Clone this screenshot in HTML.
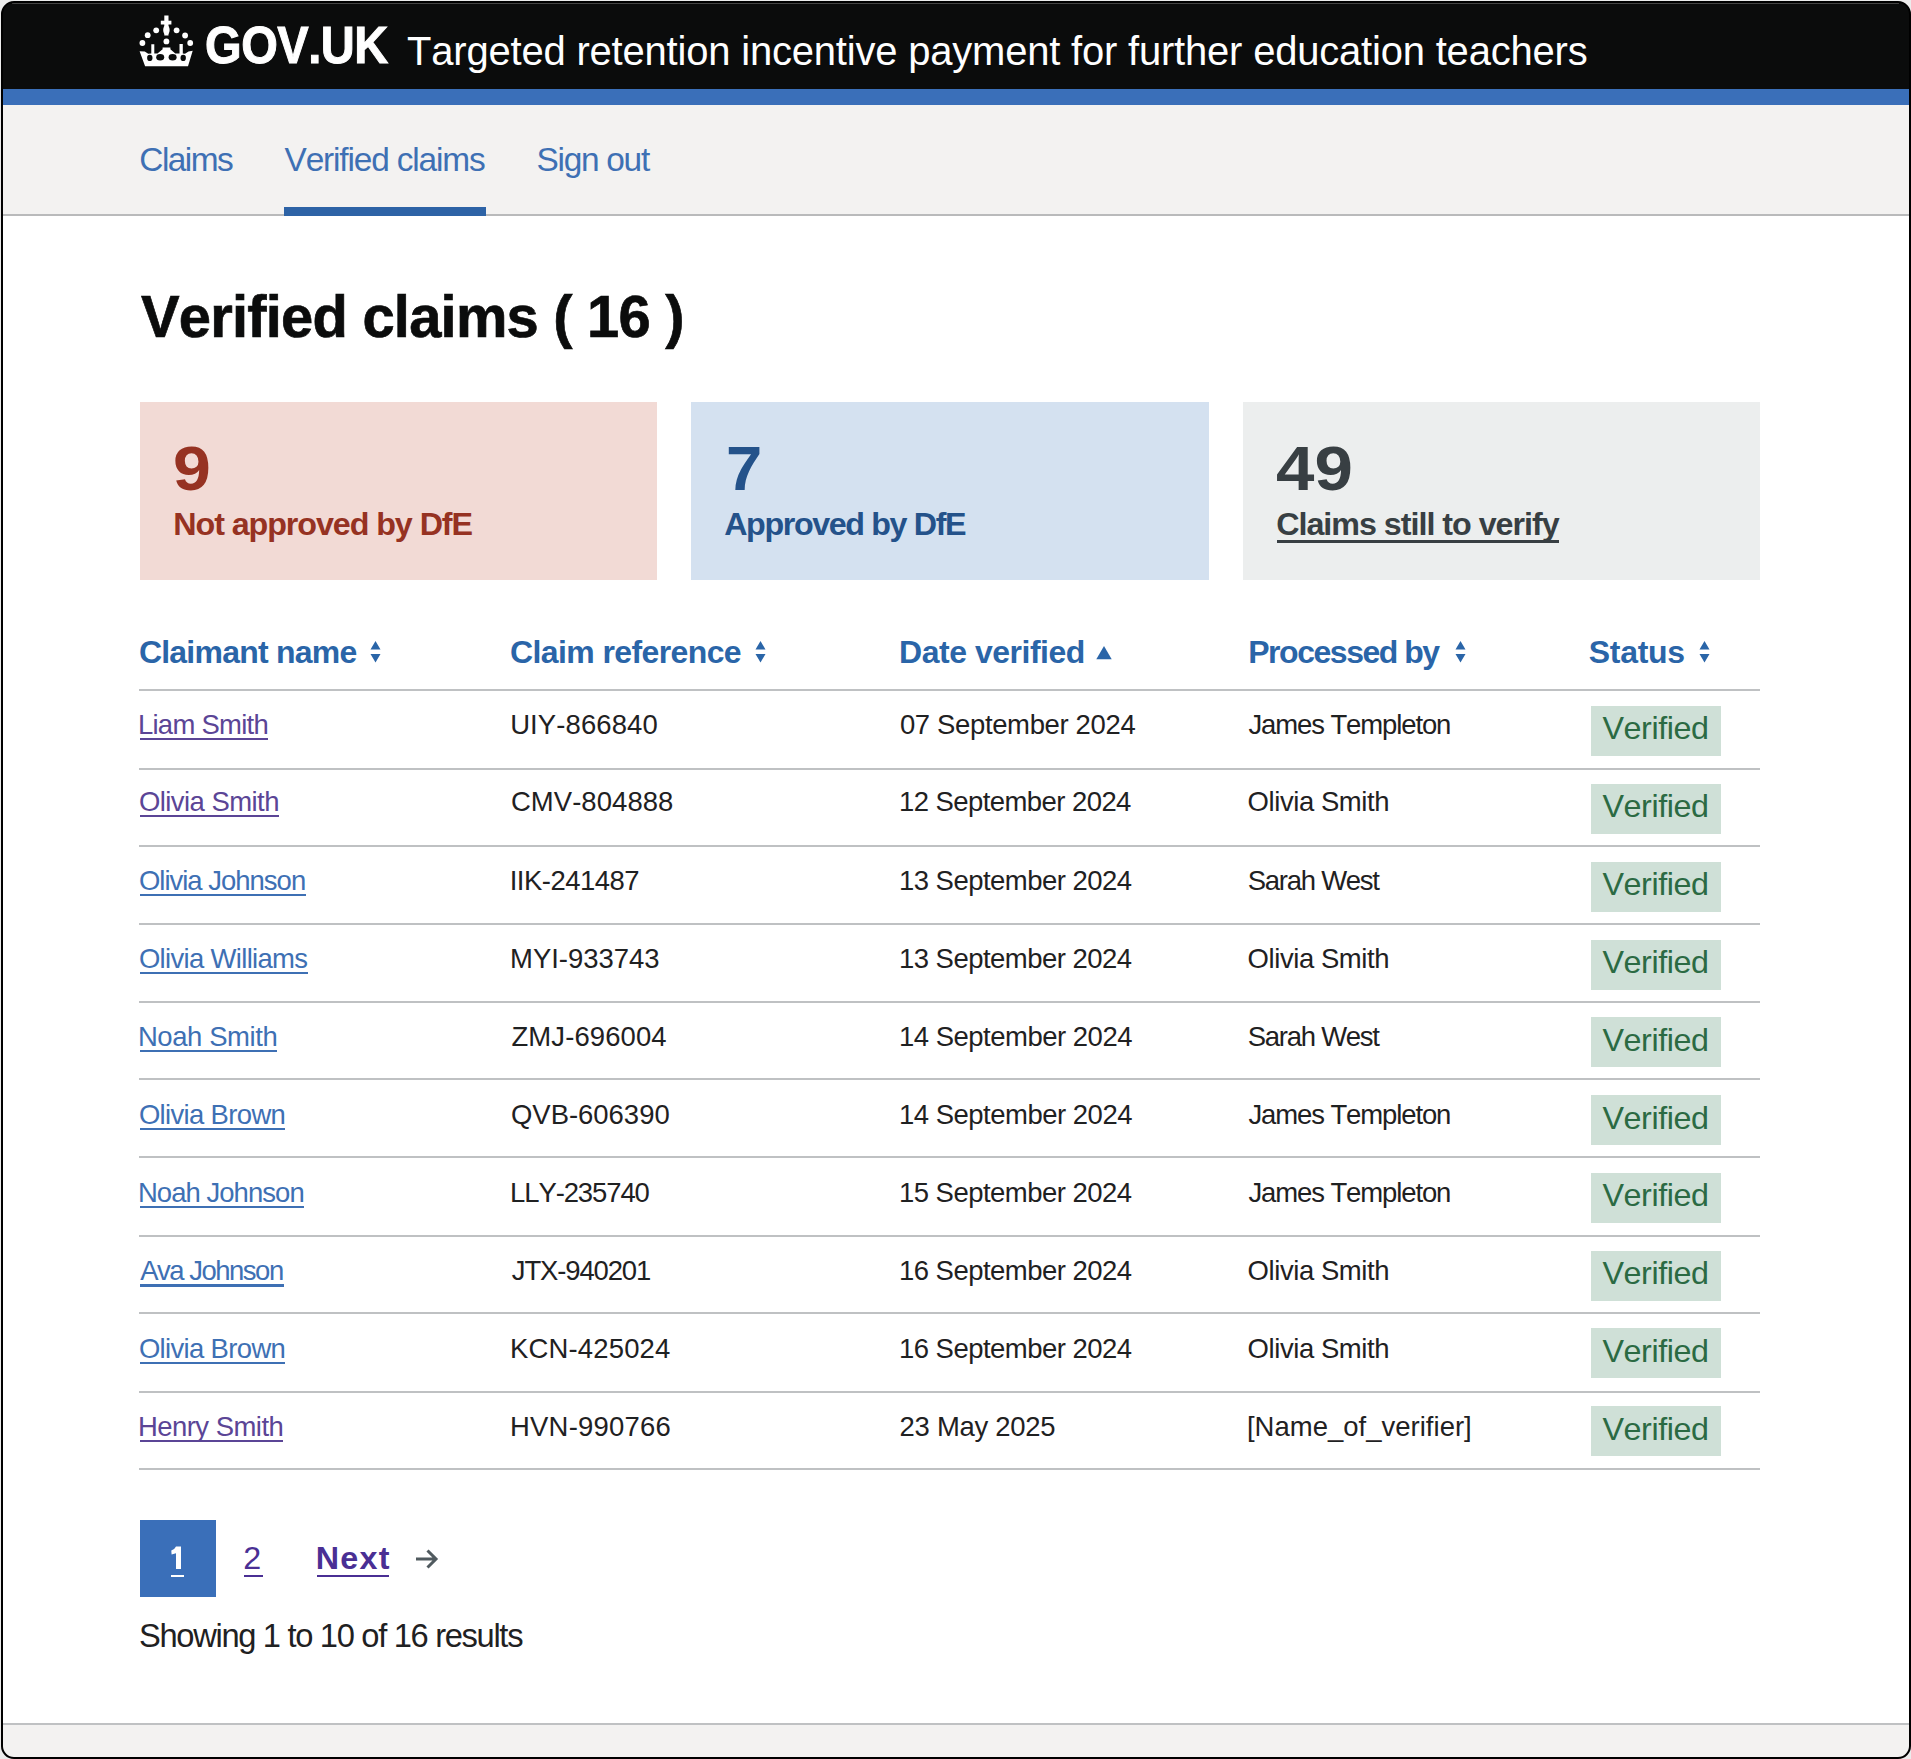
<!DOCTYPE html>
<html><head><meta charset="utf-8"><title>Verified claims</title>
<style>
html,body{margin:0;padding:0;background:#ffffff;}
body{width:1911px;height:1759px;position:relative;overflow:hidden;font-family:"Liberation Sans",sans-serif;}
.t{position:absolute;white-space:nowrap;margin:0;font-kerning:none;}
.b{position:absolute;}
.frame{position:absolute;left:0;top:0;width:1911px;height:1759px;box-sizing:border-box;pointer-events:none;}
</style></head><body>
<div class="b" style="left:0px;top:0px;width:1911px;height:89px;background:#0b0c0c;"></div>
<div class="b" style="left:12px;top:3px;width:1887px;height:1px;background:#444444;"></div>
<div class="b" style="left:0px;top:89px;width:1911px;height:16px;background:#3a6fb9;"></div>
<div class="b" style="left:0px;top:105px;width:1911px;height:109px;background:#f3f2f1;"></div>
<div class="b" style="left:0px;top:214px;width:1911px;height:2px;background:#b9babb;"></div>
<div class="t" style="left:205.37px;top:19.64px;font-size:51.45px;line-height:51.45px;letter-spacing:-0.500px;color:#ffffff;transform:scaleX(0.9147);transform-origin:0 0;font-weight:700;-webkit-text-stroke:1px #ffffff;">GOV.UK</div>
<div class="t" style="left:407.10px;top:31.76px;font-size:39.97px;line-height:39.97px;letter-spacing:-0.190px;color:#ffffff;">Targeted retention incentive payment for further education teachers</div>
<div class="t" style="left:139.30px;top:143.00px;font-size:33.43px;line-height:33.43px;letter-spacing:-1.529px;color:#3e70b4;">Claims</div>
<div class="t" style="left:284.55px;top:143.00px;font-size:33.43px;line-height:33.43px;letter-spacing:-1.158px;color:#3e70b4;">Verified claims</div>
<div class="t" style="left:536.48px;top:143.00px;font-size:33.43px;line-height:33.43px;letter-spacing:-1.272px;color:#3e70b4;">Sign out</div>
<div class="b" style="left:284px;top:207px;width:202px;height:9px;background:#2d63a6;"></div>
<div class="t" style="left:140.90px;top:287.15px;font-size:59.59px;line-height:59.59px;letter-spacing:-0.800px;color:#0b0c0c;transform:scaleX(0.9717);transform-origin:0 0;font-weight:700;-webkit-text-stroke:0.7px #0b0c0c;">Verified claims ( 16 )</div>
<div class="b" style="left:139.7px;top:402px;width:517.5px;height:178px;background:#f2dad5;"></div>
<div class="b" style="left:691.2px;top:402px;width:517.5px;height:178px;background:#d4e1f0;"></div>
<div class="b" style="left:1242.5px;top:402px;width:517.5px;height:178px;background:#eceeee;"></div>
<div class="t" style="left:173.14px;top:437.54px;font-size:62.21px;line-height:62.21px;letter-spacing:0.000px;color:#963222;transform:scaleX(1.0952);transform-origin:0 0;font-weight:700;">9</div>
<div class="t" style="left:173.34px;top:507.69px;font-size:32.27px;line-height:32.27px;letter-spacing:-1.077px;color:#963222;font-weight:700;">Not approved by DfE</div>
<div class="t" style="left:725.50px;top:437.64px;font-size:62.21px;line-height:62.21px;letter-spacing:0.000px;color:#24528a;transform:scaleX(1.0483);transform-origin:0 0;font-weight:700;">7</div>
<div class="t" style="left:724.20px;top:507.69px;font-size:32.27px;line-height:32.27px;letter-spacing:-1.385px;color:#24528a;font-weight:700;">Approved by DfE</div>
<div class="t" style="left:1275.55px;top:437.64px;font-size:62.21px;line-height:62.21px;letter-spacing:0.000px;color:#383f43;transform:scaleX(1.1100);transform-origin:0 0;font-weight:700;">49</div>
<div class="t" style="left:1276.18px;top:507.89px;font-size:32.27px;line-height:32.27px;letter-spacing:-1.017px;color:#383f43;font-weight:700;">Claims still to verify</div>
<div class="b" style="left:1276.6px;top:540px;width:282.9000000000001px;height:2.6000000000000227px;background:#383f43;"></div>
<div class="t" style="left:138.89px;top:635.93px;font-size:31.98px;line-height:31.98px;letter-spacing:-0.755px;color:#2a65a8;font-weight:700;">Claimant name</div>
<div class="t" style="left:510.09px;top:635.93px;font-size:31.98px;line-height:31.98px;letter-spacing:-0.596px;color:#2a65a8;font-weight:700;">Claim reference</div>
<div class="t" style="left:899.06px;top:635.93px;font-size:31.98px;line-height:31.98px;letter-spacing:-0.466px;color:#2a65a8;font-weight:700;">Date verified</div>
<div class="t" style="left:1248.26px;top:635.93px;font-size:31.98px;line-height:31.98px;letter-spacing:-1.459px;color:#2a65a8;font-weight:700;">Processed by</div>
<div class="t" style="left:1588.78px;top:635.93px;font-size:31.98px;line-height:31.98px;letter-spacing:-0.279px;color:#2a65a8;font-weight:700;">Status</div>
<svg class="b" style="left:370px;top:641px" width="11" height="22" viewBox="0 0 11 22"><path d="M5.5 0 L10.5 8.5 L0.5 8.5 Z M0.5 13 L10.5 13 L5.5 21.5 Z" fill="#2a65a8"/></svg>
<svg class="b" style="left:754.5px;top:641px" width="11" height="22" viewBox="0 0 11 22"><path d="M5.5 0 L10.5 8.5 L0.5 8.5 Z M0.5 13 L10.5 13 L5.5 21.5 Z" fill="#2a65a8"/></svg>
<svg class="b" style="left:1454.5px;top:641px" width="11" height="22" viewBox="0 0 11 22"><path d="M5.5 0 L10.5 8.5 L0.5 8.5 Z M0.5 13 L10.5 13 L5.5 21.5 Z" fill="#2a65a8"/></svg>
<svg class="b" style="left:1698.5px;top:641px" width="11" height="22" viewBox="0 0 11 22"><path d="M5.5 0 L10.5 8.5 L0.5 8.5 Z M0.5 13 L10.5 13 L5.5 21.5 Z" fill="#2a65a8"/></svg>
<svg class="b" style="left:1096px;top:646px" width="16" height="14" viewBox="0 0 16 14"><path d="M8 0 L15.7 13.2 L0.3 13.2 Z" fill="#2a65a8"/></svg>
<div class="b" style="left:139px;top:689px;width:1621px;height:2px;background:#bfc1c3;"></div>
<div class="b" style="left:139px;top:768px;width:1621px;height:2px;background:#bfc1c3;"></div>
<div class="b" style="left:139px;top:845px;width:1621px;height:2px;background:#bfc1c3;"></div>
<div class="b" style="left:139px;top:923px;width:1621px;height:2px;background:#bfc1c3;"></div>
<div class="b" style="left:139px;top:1001px;width:1621px;height:2px;background:#bfc1c3;"></div>
<div class="b" style="left:139px;top:1078px;width:1621px;height:2px;background:#bfc1c3;"></div>
<div class="b" style="left:139px;top:1156px;width:1621px;height:2px;background:#bfc1c3;"></div>
<div class="b" style="left:139px;top:1235px;width:1621px;height:2px;background:#bfc1c3;"></div>
<div class="b" style="left:139px;top:1312px;width:1621px;height:2px;background:#bfc1c3;"></div>
<div class="b" style="left:139px;top:1391px;width:1621px;height:2px;background:#bfc1c3;"></div>
<div class="b" style="left:139px;top:1468px;width:1621px;height:2px;background:#bfc1c3;"></div>
<div class="t" style="left:137.95px;top:710.60px;font-size:27.47px;line-height:27.47px;letter-spacing:-0.729px;color:#5b4596;">Liam Smith</div>
<div class="b" style="left:139.7px;top:737.6px;width:128.60000000000002px;height:2.2999999999999545px;background:#5b4596;"></div>
<div class="t" style="left:510.18px;top:710.60px;font-size:27.47px;line-height:27.47px;letter-spacing:0.109px;color:#1f2122;">UIY-866840</div>
<div class="t" style="left:899.93px;top:710.60px;font-size:27.47px;line-height:27.47px;letter-spacing:-0.346px;color:#1f2122;">07 September 2024</div>
<div class="t" style="left:1248.47px;top:710.60px;font-size:27.47px;line-height:27.47px;letter-spacing:-1.101px;color:#1f2122;">James Templeton</div>
<div class="b" style="left:1590.5px;top:706.3px;width:130.0999999999999px;height:50.0px;background:#cfe0d7;"></div>
<div class="t" style="left:1602.46px;top:711.99px;font-size:32.27px;line-height:32.27px;letter-spacing:-0.426px;color:#2b6a43;">Verified</div>
<div class="t" style="left:138.90px;top:788.25px;font-size:27.47px;line-height:27.47px;letter-spacing:-0.542px;color:#5b4596;">Olivia Smith</div>
<div class="b" style="left:139.7px;top:815.3px;width:139.3px;height:2.2000000000000455px;background:#5b4596;"></div>
<div class="t" style="left:510.90px;top:788.25px;font-size:27.47px;line-height:27.47px;letter-spacing:0.070px;color:#1f2122;">CMV-804888</div>
<div class="t" style="left:898.91px;top:788.25px;font-size:27.47px;line-height:27.47px;letter-spacing:-0.551px;color:#1f2122;">12 September 2024</div>
<div class="t" style="left:1247.60px;top:788.25px;font-size:27.47px;line-height:27.47px;letter-spacing:-0.423px;color:#1f2122;">Olivia Smith</div>
<div class="b" style="left:1590.5px;top:783.6px;width:130.0999999999999px;height:50.0px;background:#cfe0d7;"></div>
<div class="t" style="left:1602.46px;top:790.29px;font-size:32.27px;line-height:32.27px;letter-spacing:-0.426px;color:#2b6a43;">Verified</div>
<div class="t" style="left:138.90px;top:867.05px;font-size:27.47px;line-height:27.47px;letter-spacing:-0.992px;color:#3e70b4;">Olivia Johnson</div>
<div class="b" style="left:139.7px;top:894.1px;width:166.0px;height:2.199999999999932px;background:#3e70b4;"></div>
<div class="t" style="left:509.76px;top:867.05px;font-size:27.47px;line-height:27.47px;letter-spacing:-0.521px;color:#1f2122;">IIK-241487</div>
<div class="t" style="left:898.91px;top:867.05px;font-size:27.47px;line-height:27.47px;letter-spacing:-0.507px;color:#1f2122;">13 September 2024</div>
<div class="t" style="left:1247.65px;top:867.05px;font-size:27.47px;line-height:27.47px;letter-spacing:-1.240px;color:#1f2122;">Sarah West</div>
<div class="b" style="left:1590.5px;top:861.8px;width:130.0999999999999px;height:50.0px;background:#cfe0d7;"></div>
<div class="t" style="left:1602.46px;top:868.49px;font-size:32.27px;line-height:32.27px;letter-spacing:-0.426px;color:#2b6a43;">Verified</div>
<div class="t" style="left:138.90px;top:944.85px;font-size:27.47px;line-height:27.47px;letter-spacing:-0.669px;color:#3e70b4;">Olivia Williams</div>
<div class="b" style="left:139.7px;top:971.9px;width:168.7px;height:2.2000000000000455px;background:#3e70b4;"></div>
<div class="t" style="left:510.05px;top:944.85px;font-size:27.47px;line-height:27.47px;letter-spacing:-0.010px;color:#1f2122;">MYI-933743</div>
<div class="t" style="left:898.91px;top:944.85px;font-size:27.47px;line-height:27.47px;letter-spacing:-0.507px;color:#1f2122;">13 September 2024</div>
<div class="t" style="left:1247.60px;top:944.85px;font-size:27.47px;line-height:27.47px;letter-spacing:-0.423px;color:#1f2122;">Olivia Smith</div>
<div class="b" style="left:1590.5px;top:939.5px;width:130.0999999999999px;height:50.0px;background:#cfe0d7;"></div>
<div class="t" style="left:1602.46px;top:946.19px;font-size:32.27px;line-height:32.27px;letter-spacing:-0.426px;color:#2b6a43;">Verified</div>
<div class="t" style="left:137.95px;top:1022.65px;font-size:27.47px;line-height:27.47px;letter-spacing:-0.410px;color:#3e70b4;">Noah Smith</div>
<div class="b" style="left:139.7px;top:1049.7px;width:137.60000000000002px;height:2.2000000000000455px;background:#3e70b4;"></div>
<div class="t" style="left:511.43px;top:1022.65px;font-size:27.47px;line-height:27.47px;letter-spacing:0.107px;color:#1f2122;">ZMJ-696004</div>
<div class="t" style="left:898.91px;top:1022.65px;font-size:27.47px;line-height:27.47px;letter-spacing:-0.482px;color:#1f2122;">14 September 2024</div>
<div class="t" style="left:1247.65px;top:1022.65px;font-size:27.47px;line-height:27.47px;letter-spacing:-1.240px;color:#1f2122;">Sarah West</div>
<div class="b" style="left:1590.5px;top:1017.3px;width:130.0999999999999px;height:50.0px;background:#cfe0d7;"></div>
<div class="t" style="left:1602.46px;top:1023.99px;font-size:32.27px;line-height:32.27px;letter-spacing:-0.426px;color:#2b6a43;">Verified</div>
<div class="t" style="left:138.90px;top:1101.05px;font-size:27.47px;line-height:27.47px;letter-spacing:-0.655px;color:#3e70b4;">Olivia Brown</div>
<div class="b" style="left:139.7px;top:1128.1px;width:145.7px;height:2.2000000000000455px;background:#3e70b4;"></div>
<div class="t" style="left:511.00px;top:1101.05px;font-size:27.47px;line-height:27.47px;letter-spacing:-0.017px;color:#1f2122;">QVB-606390</div>
<div class="t" style="left:898.91px;top:1101.05px;font-size:27.47px;line-height:27.47px;letter-spacing:-0.482px;color:#1f2122;">14 September 2024</div>
<div class="t" style="left:1248.47px;top:1101.05px;font-size:27.47px;line-height:27.47px;letter-spacing:-1.101px;color:#1f2122;">James Templeton</div>
<div class="b" style="left:1590.5px;top:1095.0px;width:130.0999999999999px;height:50.0px;background:#cfe0d7;"></div>
<div class="t" style="left:1602.46px;top:1101.69px;font-size:32.27px;line-height:32.27px;letter-spacing:-0.426px;color:#2b6a43;">Verified</div>
<div class="t" style="left:137.95px;top:1179.05px;font-size:27.47px;line-height:27.47px;letter-spacing:-0.948px;color:#3e70b4;">Noah Johnson</div>
<div class="b" style="left:139.7px;top:1206.1px;width:164.5px;height:2.2000000000000455px;background:#3e70b4;"></div>
<div class="t" style="left:510.05px;top:1179.05px;font-size:27.47px;line-height:27.47px;letter-spacing:-1.097px;color:#1f2122;">LLY-235740</div>
<div class="t" style="left:898.91px;top:1179.05px;font-size:27.47px;line-height:27.47px;letter-spacing:-0.507px;color:#1f2122;">15 September 2024</div>
<div class="t" style="left:1248.47px;top:1179.05px;font-size:27.47px;line-height:27.47px;letter-spacing:-1.101px;color:#1f2122;">James Templeton</div>
<div class="b" style="left:1590.5px;top:1172.8px;width:130.0999999999999px;height:50.0px;background:#cfe0d7;"></div>
<div class="t" style="left:1602.46px;top:1179.49px;font-size:32.27px;line-height:32.27px;letter-spacing:-0.426px;color:#2b6a43;">Verified</div>
<div class="t" style="left:140.15px;top:1257.35px;font-size:27.47px;line-height:27.47px;letter-spacing:-1.479px;color:#3e70b4;">Ava Johnson</div>
<div class="b" style="left:139.7px;top:1284.4px;width:144.0px;height:2.199999999999818px;background:#3e70b4;"></div>
<div class="t" style="left:511.87px;top:1257.35px;font-size:27.47px;line-height:27.47px;letter-spacing:-1.143px;color:#1f2122;">JTX-940201</div>
<div class="t" style="left:898.91px;top:1257.35px;font-size:27.47px;line-height:27.47px;letter-spacing:-0.507px;color:#1f2122;">16 September 2024</div>
<div class="t" style="left:1247.60px;top:1257.35px;font-size:27.47px;line-height:27.47px;letter-spacing:-0.423px;color:#1f2122;">Olivia Smith</div>
<div class="b" style="left:1590.5px;top:1250.5px;width:130.0999999999999px;height:50.0px;background:#cfe0d7;"></div>
<div class="t" style="left:1602.46px;top:1257.19px;font-size:32.27px;line-height:32.27px;letter-spacing:-0.426px;color:#2b6a43;">Verified</div>
<div class="t" style="left:138.90px;top:1334.65px;font-size:27.47px;line-height:27.47px;letter-spacing:-0.655px;color:#3e70b4;">Olivia Brown</div>
<div class="b" style="left:139.7px;top:1361.7px;width:145.7px;height:2.2000000000000455px;background:#3e70b4;"></div>
<div class="t" style="left:510.05px;top:1334.65px;font-size:27.47px;line-height:27.47px;letter-spacing:0.160px;color:#1f2122;">KCN-425024</div>
<div class="t" style="left:898.91px;top:1334.65px;font-size:27.47px;line-height:27.47px;letter-spacing:-0.507px;color:#1f2122;">16 September 2024</div>
<div class="t" style="left:1247.60px;top:1334.65px;font-size:27.47px;line-height:27.47px;letter-spacing:-0.423px;color:#1f2122;">Olivia Smith</div>
<div class="b" style="left:1590.5px;top:1328.3px;width:130.0999999999999px;height:50.0px;background:#cfe0d7;"></div>
<div class="t" style="left:1602.46px;top:1334.99px;font-size:32.27px;line-height:32.27px;letter-spacing:-0.426px;color:#2b6a43;">Verified</div>
<div class="t" style="left:137.95px;top:1412.65px;font-size:27.47px;line-height:27.47px;letter-spacing:-0.529px;color:#5b4596;">Henry Smith</div>
<div class="b" style="left:139.7px;top:1439.7px;width:143.60000000000002px;height:2.2000000000000455px;background:#5b4596;"></div>
<div class="t" style="left:510.05px;top:1412.65px;font-size:27.47px;line-height:27.47px;letter-spacing:0.205px;color:#1f2122;">HVN-990766</div>
<div class="t" style="left:899.62px;top:1412.65px;font-size:27.47px;line-height:27.47px;letter-spacing:-0.279px;color:#1f2122;">23 May 2025</div>
<div class="t" style="left:1246.94px;top:1412.65px;font-size:27.47px;line-height:27.47px;letter-spacing:0.022px;color:#1f2122;">[Name_of_verifier]</div>
<div class="b" style="left:1590.5px;top:1406.1px;width:130.0999999999999px;height:50.0px;background:#cfe0d7;"></div>
<div class="t" style="left:1602.46px;top:1412.79px;font-size:32.27px;line-height:32.27px;letter-spacing:-0.426px;color:#2b6a43;">Verified</div>
<div class="b" style="left:139.5px;top:1520.4px;width:76.80000000000001px;height:76.29999999999995px;background:#3a6fb9;"></div>
<svg class="b" style="left:160px;top:1535px" width="40" height="50" viewBox="160 1535 40 50"><path d="M176 1546.4 H181 V1569.1 H176 V1553.2 L171.6 1554.6 L171.3 1550.4 Q174.5 1549.6 176 1546.4 Z" fill="#ffffff"/></svg>
<div class="b" style="left:171.1px;top:1574.5px;width:12.5px;height:2.599999999999909px;background:#ffffff;"></div>
<div class="t" style="left:243.18px;top:1542.49px;font-size:32.27px;line-height:32.27px;letter-spacing:0.000px;color:#4a2f94;">2</div>
<div class="b" style="left:244px;top:1574.5px;width:19px;height:2.2999999999999545px;background:#4a2f94;"></div>
<div class="t" style="left:315.84px;top:1542.49px;font-size:32.27px;line-height:32.27px;letter-spacing:1.204px;color:#4a2f94;font-weight:700;">Next</div>
<div class="b" style="left:316.5px;top:1574.5px;width:72.5px;height:2.2999999999999545px;background:#4a2f94;"></div>
<svg class="b" style="left:414px;top:1548px" width="26" height="22" viewBox="0 0 26 22"><path d="M2 11 H22 M13.5 2.5 L22 11 L13.5 19.5" stroke="#505a5f" stroke-width="3" fill="none"/></svg>
<div class="t" style="left:139.01px;top:1619.62px;font-size:32.70px;line-height:32.70px;letter-spacing:-1.325px;color:#1f2122;">Showing 1 to 10 of 16 results</div>
<div class="b" style="left:0px;top:1722.5px;width:1911px;height:2.0px;background:#bfc1c3;"></div>
<div class="b" style="left:0px;top:1724.5px;width:1911px;height:34.5px;background:#f3f2f1;"></div>
<svg class="b" style="left:130px;top:10px" width="70" height="65" viewBox="130 10 70 65">
<g fill="#ffffff">
<rect x="164.3" y="15.5" width="4.2" height="20"/>
<rect x="160.8" y="20.7" width="10.6" height="3.8"/>
<ellipse cx="166.4" cy="30" rx="3.2" ry="5"/>
<circle cx="156.2" cy="30.3" r="2.9"/>
<circle cx="176.6" cy="30.3" r="2.9"/>
<circle cx="147.7" cy="35.2" r="2.9"/>
<circle cx="185.1" cy="35.5" r="2.9"/>
<circle cx="142.4" cy="43" r="2.9"/>
<circle cx="190.2" cy="43" r="2.9"/>
<circle cx="166.4" cy="41.4" r="2.9"/>
<path d="M139.6 51.2 L144.8 51.6 L148.2 53.8 L151.3 53.4 L151.3 44.2 L154.3 44.2 L154.3 53.4 L157.5 53.4 L162.6 49.3 L162.6 47.5 L170.4 47.5 L170.4 49.3 L175.3 53.4 L179.5 53.4 L179.5 43.9 L182.8 43.9 L182.8 53.4 L185 53.8 L188.5 51.6 L192.7 50.8 L188 66.2 L145.1 66.2 Z"/>
</g>
<g fill="#0b0c0c">
<ellipse cx="149.8" cy="57.9" rx="2.7" ry="3.1"/>
<ellipse cx="160.2" cy="57.3" rx="4.0" ry="3.2"/>
<ellipse cx="172.6" cy="57.3" rx="4.0" ry="3.2"/>
<ellipse cx="183.2" cy="57.9" rx="2.7" ry="3.1"/>
</g>
</svg>
<svg class="frame" width="1911" height="1759" viewBox="0 0 1911 1759"><path fill-rule="evenodd" fill="#ececec" d="M0 0H1911V1759H0Z M14 2.1 H1898 A12 12 0 0 1 1910 14.1 V1746 A12 12 0 0 1 1898 1758 H14 A12 12 0 0 1 2 1746 V14.1 A12 12 0 0 1 14 2.1Z"/><rect x="2" y="2.1" width="1908" height="1755.9" rx="12" ry="12" fill="none" stroke="#000" stroke-width="2"/></svg>
</body></html>
